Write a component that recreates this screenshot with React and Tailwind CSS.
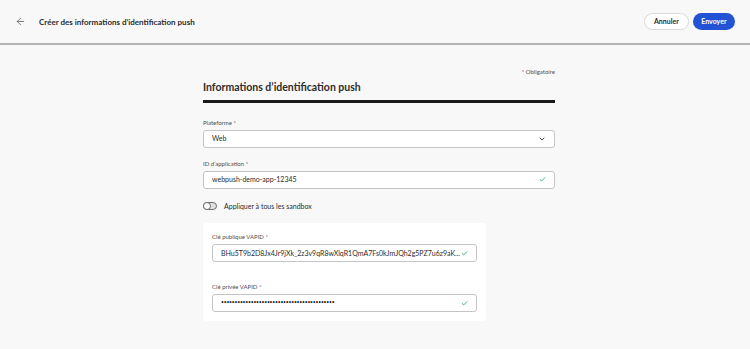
import { ArrowLeft, ChevronDown, Check } from "lucide-react";

const font = { fontFamily: 'Lato, "Noto Sans", sans-serif' };

const Label = ({ children }) => (
  <div className="text-[6px] text-[#505050] leading-none mb-[4px]">
    {children} <span className="text-[#505050]">*</span>
  </div>
);

const Field = ({ value, icon, valueClass = "text-[7px]" }) => (
  <div className="flex items-center h-[18px] bg-white border border-[#c4c4c4] rounded-[3px] pl-[8px] pr-[8px]">
    <span className={`flex-1 whitespace-nowrap overflow-hidden text-[#2c2c2c] ${valueClass}`}>{value}</span>
    {icon}
  </div>
);

const Ok = () => <Check className="w-[7px] h-[7px] text-[#2d9d78] shrink-0" strokeWidth={3} />;

export default function App() {
  return (
    <div style={font} className="w-[750px] h-[349px] bg-[#f8f8f8] flex flex-col overflow-hidden">
      <header className="h-[45px] flex items-center border-b-2 border-[#b4b4b4] px-[15px]">
        <ArrowLeft className="w-[11px] h-[11px] text-[#4b4b4b]" strokeWidth={1.5} />
        <h1 className="ml-[13px] text-[8px] font-bold text-[#2c2c2c]">
          Créer des informations d’identification push
        </h1>
        <div className="ml-auto flex items-center gap-[4px]">
          <button className="h-[17px] px-[9px] rounded-full border border-[#d8d8d8] bg-white text-[7px] font-bold text-[#2c2c2c]">
            Annuler
          </button>
          <button className="h-[17px] px-[8.5px] rounded-full bg-[#2253d4] text-[7px] font-bold text-white">
            Envoyer
          </button>
        </div>
      </header>

      <main className="flex justify-center pt-[24px] pl-[8px]">
        <div className="w-[352px]">
          <div className="text-right text-[6px] text-[#505050] leading-none">* Obligatoire</div>
          <h2 className="mt-[7px] text-[10.5px] font-bold text-[#2c2c2c] leading-none">
            Informations d’identification push
          </h2>
          <div className="mt-[7px] h-[3px] bg-[#1a1a1a]" />

          <div className="mt-[17px]">
            <Label>Plateforme</Label>
            <Field value="Web" icon={<ChevronDown className="w-[8px] h-[8px] text-[#4b4b4b]" strokeWidth={3} />} />
          </div>

          <div className="mt-[13px]">
            <Label>ID d’application</Label>
            <Field value="webpush-demo-app-12345" icon={<Ok />} />
          </div>

          <div className="mt-[12px] flex items-center gap-[7px]">
            <div className="w-[14px] h-[8px] rounded-full bg-[#e0e0e0] border border-[#6e6e6e] flex items-center">
              <div className="w-[8px] h-[8px] rounded-full bg-white border-[1.5px] border-[#6e6e6e] -ml-[1px]" />
            </div>
            <span className="text-[7px] text-[#2c2c2c]">Appliquer à tous les sandbox</span>
          </div>

          <div className="mt-[12px] w-[283px] bg-white rounded-[3px] px-[9px] pt-[11px] pb-[9px]">
            <Label>Clé publique VAPID</Label>
            <Field value="BHu5T9b2D8Jx4Jr9jXk_2z3v9qR8wXlqR1QmA7Fs0kJmJQh2g5PZ7u6z9aK..." icon={<Ok />} />
            <div className="mt-[22px]">
              <Label>Clé privée VAPID</Label>
              <Field
                value="••••••••••••••••••••••••••••••••••••••••••"
                valueClass="text-[5px] tracking-[-0.2px]"
                icon={<Ok />}
              />
            </div>
          </div>
        </div>
      </main>
    </div>
  );
}
